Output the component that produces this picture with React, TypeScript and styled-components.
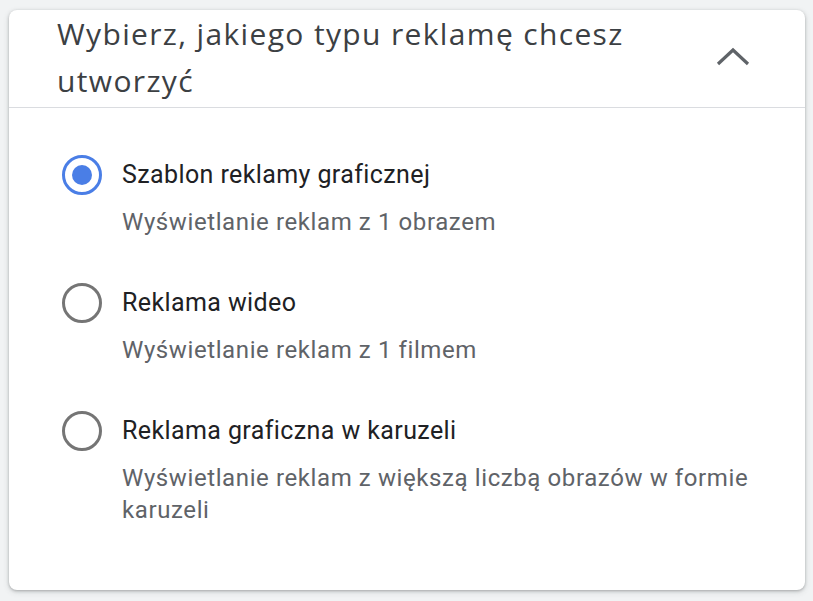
import React, { useState } from "react"
import styled, { createGlobalStyle } from "styled-components"

const GlobalStyle = createGlobalStyle`
  html, body {
    margin: 0;
    padding: 0;
    background: #f1f3f4;
  }
  body {
    font-family: Roboto, "Liberation Sans", Arial, sans-serif;
  }
`

type AdType = {
  id: string
  title: string
  description: string
}

const adTypes: AdType[] = [
  {
    id: "image",
    title: "Szablon reklamy graficznej",
    description: "Wyświetlanie reklam z 1 obrazem",
  },
  {
    id: "video",
    title: "Reklama wideo",
    description: "Wyświetlanie reklam z 1 filmem",
  },
  {
    id: "carousel",
    title: "Reklama graficzna w karuzeli",
    description: "Wyświetlanie reklam z większą liczbą obrazów w formie karuzeli",
  },
]

export default function App() {
  const [selected, setSelected] = useState("image")

  return (
    <>
      <GlobalStyle />
      <Page>
        <Card>
          <Header>
            <Title>Wybierz, jakiego typu reklamę chcesz utworzyć</Title>
            <CollapseButton aria-label="Zwiń">
              <svg width="34" height="20" viewBox="0 0 34 20">
                <path
                  d="M2 17 L17 3 L32 17"
                  fill="none"
                  stroke="#5f6368"
                  strokeWidth="3.2"
                />
              </svg>
            </CollapseButton>
          </Header>
          <OptionList>
            {adTypes.map((adType) => (
              <Option key={adType.id} onClick={() => setSelected(adType.id)}>
                <Radio $checked={selected === adType.id} />
                <OptionText>
                  <OptionTitle>{adType.title}</OptionTitle>
                  <OptionDescription>{adType.description}</OptionDescription>
                </OptionText>
              </Option>
            ))}
          </OptionList>
        </Card>
      </Page>
    </>
  )
}

const Page = styled.div`
  padding: 10px 8px 11px 9px;
`

const Card = styled.div`
  background: #fff;
  border-radius: 8px;
  box-shadow: 0 1px 3px rgba(60, 64, 67, 0.35), 0 2px 6px rgba(60, 64, 67, 0.15);
  height: 580px;
  box-sizing: border-box;
`

const Header = styled.div`
  display: flex;
  align-items: center;
  justify-content: space-between;
  padding: 0 55px 0 48px;
  height: 97px;
  border-bottom: 1px solid #dadce0;
`

const Title = styled.h2`
  margin: -4px 0 0;
  max-width: 620px;
  font-family: "Open Sans", Roboto, sans-serif;
  font-size: 30px;
  font-weight: 500;
  line-height: 47px;
  letter-spacing: 1.35px;
  color: #3c4043;
`

const CollapseButton = styled.button`
  display: flex;
  align-items: center;
  justify-content: center;
  margin-top: -4px;
  padding: 0;
  border: none;
  background: none;
  cursor: pointer;
`

const OptionList = styled.div`
  display: flex;
  flex-direction: column;
  gap: 45px;
  padding: 47px 40px 0 53px;
`

const Option = styled.label`
  display: flex;
  gap: 20px;
  cursor: pointer;
`

const Radio = styled.span<{ $checked: boolean }>`
  flex: none;
  width: 40px;
  height: 40px;
  box-sizing: border-box;
  border-radius: 50%;
  border: 3.5px solid ${(p) => (p.$checked ? "#4a7ee6" : "#757575")};
  display: flex;
  align-items: center;
  justify-content: center;
  &::after {
    content: "";
    width: 20px;
    height: 20px;
    border-radius: 50%;
    background: #4a7ee6;
    display: ${(p) => (p.$checked ? "block" : "none")};
  }
`

const OptionText = styled.div`
  display: flex;
  flex-direction: column;
  gap: 16px;
  padding-top: 5px;
`

const OptionTitle = styled.div`
  font-size: 25px;
  line-height: 30px;
  letter-spacing: 0.4px;
  color: #202124;
`

const OptionDescription = styled.div`
  font-size: 24px;
  line-height: 32px;
  letter-spacing: 0.6px;
  color: #5f6368;
`
